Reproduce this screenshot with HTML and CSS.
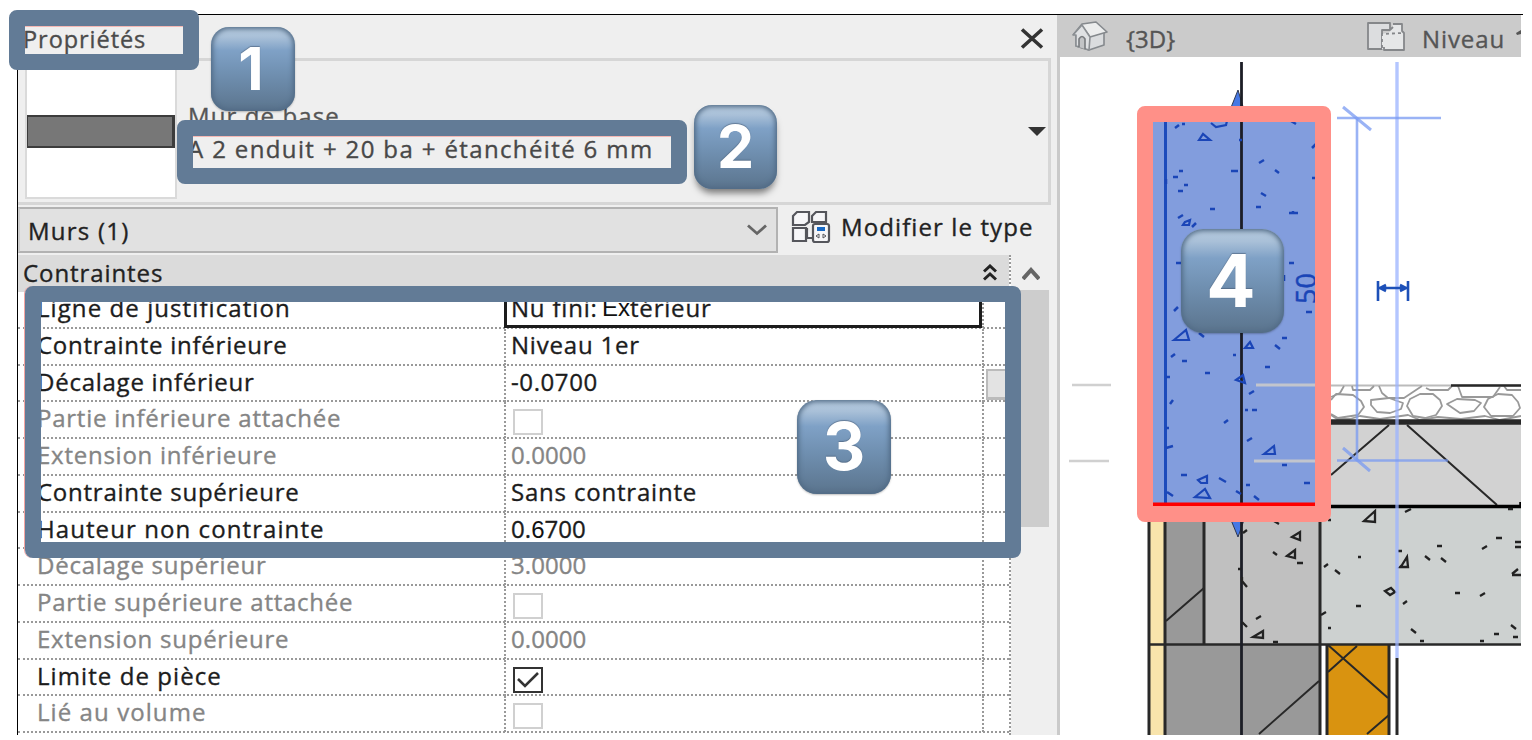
FILE: index.html
```html
<!DOCTYPE html>
<html lang="fr">
<head>
<meta charset="utf-8">
<title>Propriétés</title>
<link rel="stylesheet" href="styles.css">
</head>
<body>
<main class="stage">
  <div class="capture">
    <section class="panel">
      <header class="panel-head">
        <span class="title">Propriétés</span>
        <svg class="close" width="24" height="21" viewBox="0 0 24 21"><path d="M2 1.500L22 19.500M22 1.500L2 19.500" stroke="#333" stroke-width="3.600"/></svg>
      </header>
      <div class="type-box">
        <div class="preview"><div class="preview-bar"></div></div>
        <div class="type-names"><span class="family">Mur de base</span><span class="type">A 2 enduit + 20 ba + étanchéité 6 mm</span></div>
        <svg class="drop" width="18" height="9" viewBox="0 0 18 9"><path d="M0 0H18L9 9Z" fill="#333"/></svg>
      </div>
      <div class="filter-row">
        <div class="combo"><span class="combo-text">Murs (1)</span>
          <svg width="20" height="12" viewBox="0 0 20 12"><path d="M1 1.500L10 9.500L19 1.500" fill="none" stroke="#666" stroke-width="2.800"/></svg>
        </div>
        <svg class="edit-icon" width="40" height="34" viewBox="0 0 40 34" fill="#f6f6f8" stroke="#55565c" stroke-width="2.200">
          <path d="M2 6L6 2H18V12L14 15H2ZM21 6L25 2H35V12H21ZM2 18H15V31H2Z"/><path d="M16 18V28H22"/><rect x="22" y="14" width="16" height="18" rx="2"/><path d="M26 19H34" stroke="#1769c5" stroke-width="4"/><path d="M25 26L28 24V28ZM35 26L32 24V28Z" stroke-width="1"/>
        </svg>
        <span class="edit-text">Modifier le type</span>
      </div>
      <div class="grid-area">
        <div class="table">
          <div class="group"><span class="group-text">Contraintes</span>
            <svg width="14" height="17" viewBox="0 0 14 17"><path d="M1 7.500L7 2L13 7.500M1 15.500L7 10L13 15.500" fill="none" stroke="#222" stroke-width="3"/></svg>
          </div>
          <div class="row"><span class="name wide">Ligne de justification</span><span class="value focus"><span class="v1">Nu fini:</span><span class="arial">Ex</span><span>térieur</span></span><span class="assoc"></span></div>
          <div class="row"><span class="name">Contrainte inférieure</span><span class="value">Niveau 1er</span><span class="assoc"></span></div>
          <div class="row"><span class="name">Décalage inférieur</span><span class="value signed">-0.0700</span><span class="assoc"><i class="assoc-btn"></i></span></div>
          <div class="row off"><span class="name">Partie inférieure attachée</span><span class="value"><i class="check"></i></span><span class="assoc"></span></div>
          <div class="row off"><span class="name">Extension inférieure</span><span class="value num">0.0000</span><span class="assoc"></span></div>
          <div class="row"><span class="name">Contrainte supérieure</span><span class="value">Sans contrainte</span><span class="assoc"></span></div>
          <div class="row"><span class="name wide">Hauteur non contrainte</span><span class="value num">0.<span class="arial">6</span>700</span><span class="assoc"></span></div>
          <div class="row off"><span class="name">Décalage supérieur</span><span class="value num">3.0000</span><span class="assoc"></span></div>
          <div class="row off"><span class="name">Partie supérieure attachée</span><span class="value"><i class="check"></i></span><span class="assoc"></span></div>
          <div class="row off"><span class="name">Extension supérieure</span><span class="value num">0.0000</span><span class="assoc"></span></div>
          <div class="row"><span class="name wide">Limite de pièce</span><span class="value"><i class="check on"><svg width="24" height="20" viewBox="0 0 24 20"><path d="M2 9L9 16L22 3" fill="none" stroke="#333" stroke-width="2.600"/></svg></i></span><span class="assoc"></span></div>
          <div class="row off"><span class="name wide">Lié au volume</span><span class="value"><i class="check"></i></span><span class="assoc"></span></div>
        </div>
        <div class="scroll">
          <svg width="18" height="13" viewBox="0 0 18 13"><path d="M1 12L9 3L17 12" fill="none" stroke="#666" stroke-width="4"/></svg>
          <div class="thumb"></div>
        </div>
      </div>
    </section>
    <section class="view">
      <nav class="tabs">
        <svg class="house" width="36" height="30" viewBox="0 0 36 30" stroke="#85898d" stroke-width="1.600" fill="#dadcde" stroke-linejoin="round">
          <path d="M4 14V25L17 29L32 24V11L22 2L12 10Z"/><path d="M1 14L10 3L24 1L35 11L18 16L10 5" fill="#eceded"/><path d="M17 16V29" fill="none" stroke="#aeb1b4"/><path d="M1 14L10 4L18 16L17 29L4 25V14Z" fill="#dfe1e3" stroke="#8b8f93"/><path d="M7 26V18Q10 13 13 18V28" fill="#c2c4c6" stroke="#777a7d"/>
        </svg>
        <span class="tab-3d">{3D}</span>
        <svg class="plan" width="38" height="29" viewBox="0 0 38 29" fill="#dcdddf" stroke="#85878a" stroke-width="1.800" stroke-linejoin="round">
          <path d="M1 1H23V8H15V27H1Z"/><path d="M15 27V12L23 10L26 2H35V9L37 11V28H17Z" fill="#e6e7e8" stroke="none"/><path d="M15 26V12L35 11" fill="none" stroke-dasharray="3 3"/><path d="M26 5L23 8M26 2H35V9L37 11V28H17V25" fill="none"/>
        </svg>
        <span class="tab-level">Niveau</span>
        <svg class="tab-edge" width="6" height="8" viewBox="0 0 6 8"><path d="M0 4L5 1V5L1 6Z" fill="#555"/></svg>
      </nav>
      <svg class="drawing" width="461" height="678" viewBox="1060 57 461 678">
        <g stroke="#d0d0d0" stroke-width="2.500"><path d="M1072 385H1111M1069 461H1109"/></g>
        <rect x="1150" y="506" width="15" height="229" fill="#f8e4ac"/>
        <rect x="1166" y="506" width="38" height="139" fill="#999"/>
        <rect x="1204" y="506" width="116" height="139" fill="#c0c0c0"/>
        <rect x="1166" y="645" width="154" height="90" fill="#999"/>
        <rect x="1320" y="507" width="201" height="137" fill="#cdd1d0"/>
        <rect x="1320" y="424" width="201" height="82" fill="#d2d2d2"/>
        <rect x="1327" y="645" width="63" height="90" fill="#d99310"/>
        <g fill="none" stroke="#999" stroke-width="1.800" stroke-linejoin="round">
          <path d="M1331 385.500H1521" stroke="#bbb"/>
          <path d="M1331 397L1340 393L1344 386M1352 386L1353 390H1370L1374 386M1379 386L1382 393L1388 398H1404L1413 392L1422 386M1426 388L1430 390H1448L1452 386M1458 386L1462 397H1493L1500 387M1504 386L1507 390H1521"/>
          <path d="M1331 400L1336 394L1353 395L1361 401L1364 407L1358 415L1338 418L1331 414"/>
          <path d="M1371 400L1389 398L1403 403L1401 409L1390 413L1377 412L1371 405Z"/>
          <path d="M1410 399L1420 394H1433L1440 400L1442 406L1436 415L1425 418L1413 416L1407 406Z"/>
          <path d="M1447 404L1457 399L1475 400L1481 403L1474 411L1460 413Z"/>
          <path d="M1488 399L1498 394L1512 395L1518 402L1520 408L1513 416L1491 416L1484 407Z"/>
          <path d="M1331 415L1337 419L1350 419L1360 416L1380 419L1408 415L1420 420L1438 417L1461 419L1485 416L1500 420L1521 416"/>
        </g>
        <g stroke="#282828" fill="none" stroke-width="2">
          <path d="M1451 385.500H1521" stroke-width="2.500"/>
          <path d="M1320 422H1521" stroke-width="5.500"/>
          <path d="M1331 475L1389 425M1407 425L1497 505"/>
          <path d="M1320 506.500H1521V502" stroke="#000" stroke-width="3.500"/>
          <path d="M1149 506V735M1165 506V735M1204 522V645M1320 506V735" stroke-width="3"/>
          <path d="M1149 644.500H1521" stroke-width="2.600"/>
          <path d="M1166 621L1204 588M1259 734L1319 681"/>
          <path d="M1327 645V735M1389 645V735M1397 658V735" stroke-width="3"/>
          <path d="M1328 645L1388 698M1357 646L1328 672M1367 734L1389 715"/>
        </g>
        <rect x="1153" y="115" width="177" height="388" fill="#829ddd"/>
        <path d="M1165.500 118V503" stroke="#1c4bbb" stroke-width="3"/>
        <path d="M1230 110L1238 90L1244 110ZM1231 520L1238 537L1244 520Z" fill="#4678e4" stroke="#303850"/>
        <path d="M1241.500 62V735" stroke="#1c1e26" stroke-width="2.800"/>
        <g stroke="#c2c5cd" stroke-width="2.800"><path d="M1256 385H1316M1254 461H1316"/></g>
        <g fill="none" stroke="#1a45b7" stroke-width="2.200">
          <path d="M1199 140L1203 134L1210 140ZM1211 123L1216 127L1226 125L1227 121M1185 222L1190 220L1189 225H1183ZM1174 340L1186 330L1189 340ZM1245 348L1250 342L1253 348ZM1236 380L1243 375L1245 383ZM1264 454L1274 446L1275 454ZM1198 480L1207 476V483H1201ZM1195 497L1205 489L1210 498Z"/>
          <path stroke-width="2.500" d="M1175 128L1179 125M1182 124H1185M1173 177H1178M1179 171H1183M1178 191H1183M1184 185H1188M1166 179V184M1178 218L1183 215M1192 227L1196 223M1231 171H1238M1239 140H1242M1259 163L1264 160M1275 170L1279 173M1261 193L1266 196M1256 207H1261M1289 213H1298M1293 213V211M1210 209H1215M1312 148L1316 144M1312 178H1316M1291 121L1296 124M1176 263H1181M1289 263H1294M1284 275V281M1174 311L1178 307M1199 333L1204 337M1282 338H1287M1275 345L1280 349M1171 357L1175 354M1182 361H1187M1205 373H1210M1233 355H1236M1166 377H1170M1265 367H1270M1170 404L1173 400M1166 428H1169M1249 394L1254 391M1245 410H1248M1252 410H1257M1224 423L1228 420M1247 441L1252 438M1166 448L1173 446M1181 475H1187M1219 478L1226 482M1167 492L1173 496M1246 485H1250M1236 491L1241 494M1254 496L1259 500M1282 465H1287M1304 483H1310M1306 312H1312"/>
        </g>
        <text class="dim" transform="translate(1315.500 304) rotate(-90)">50</text>
        <rect x="1153" y="502.500" width="163" height="4" fill="#f00"/>
        <g fill="none" stroke="#222" stroke-width="2.300">
          <path d="M1292 537L1300 532V540ZM1287 556L1295 550V558ZM1253 637L1263 631V638ZM1364 521L1375 511V522ZM1402 565L1407 557L1408 567H1400ZM1385 591L1391 588L1395 592L1390 595ZM1512 574L1518 569M1512 575H1521"/>
          <path d="M1274 521L1279 524M1243 533L1247 530M1273 552L1277 555M1297 563H1303M1238 569H1241M1242 577V581L1247 587M1242 622L1247 627M1256 619L1261 616M1273 642H1278M1328 520H1331M1324 567L1328 564M1335 570L1340 574M1358 557H1361M1356 606H1361M1321 615L1326 612M1328 628H1331M1398 551H1402M1405 512L1411 509M1437 546H1442M1425 556L1430 560M1441 558L1446 562M1455 593H1460M1480 596L1485 593M1482 549L1487 546M1496 538H1502M1515 542H1521M1515 547H1521M1508 509H1513M1403 604L1407 601M1411 629L1416 633M1420 641H1424M1480 641H1484M1494 634H1499M1511 625L1516 629M1513 637H1518"/>
        </g>
        <g fill="none" stroke="#7899f2" stroke-opacity=".75">
          <path d="M1397 62V658" stroke-width="3.400" stroke="#9bb3ff"/>
          <path d="M1357 118V460M1337 118H1441M1337 460.500H1448" stroke-width="2.600"/>
          <path d="M1343 107L1371 130M1343 448L1370 471" stroke-width="3"/>
        </g>
        <path d="M1378 281V301M1408 281V301M1379 288H1407M1386 285L1380 288L1386 291M1400 285L1406 288L1400 291" fill="none" stroke="#1d50b8" stroke-width="2.600"/>
      </svg>
    </section>
  </div>
  <div class="ring ring-title"></div>
  <div class="ring ring-type"></div>
  <div class="ring ring-rows"></div>
  <div class="ring ring-wall"></div>
  <div class="badge badge-1">1</div>
  <div class="badge badge-2">2</div>
  <div class="badge badge-3">3</div>
  <div class="badge badge-4">4</div>
</main>
</body>
</html>
```
FILE: styles.css
```css
* { box-sizing: border-box; }
body { margin: 0; background: #fff; font-family: "Open Sans", "Noto Sans", sans-serif; }
.stage { position: relative; width: 1532px; height: 740px; overflow: hidden; padding: 14px 9px 5px 17px; }
.capture { display: flex; height: 721px; border-top: 1px solid #000; border-left: 1px solid #000; }
svg { display: block; flex: none; }

.panel { width: 1042px; flex: none; background: #efefef; border-right: 3px solid #cacaca; display: flex; flex-direction: column; -webkit-text-stroke: .35px currentColor; }
.panel-head { height: 43px; display: flex; justify-content: space-between; align-items: center; padding: 4px 13px 0 5px; font-size: 23.500px; color: #4b4b4b; }
.title { letter-spacing: .95px; }
.type-box { height: 147px; margin-right: 6px; border: solid #d6d6d6; border-width: 3px 3px 3px 0; display: flex; align-items: center; padding-right: 2px; }
.preview { align-self: flex-start; width: 152px; height: 138px; margin-left: 7px; border: 2px solid #dadada; background: #fff; padding-top: 52px; }
.preview-bar { height: 33px; background: #777; border: 2px solid #3c3c3c; border-width: 2px 3px 2px 1px; }
.type-names { flex: 1; display: flex; flex-direction: column; padding-left: 11px; font-size: 24px; line-height: 33px; color: #484848; }
.family { color: #555; letter-spacing: 1.100px; }
.type { letter-spacing: 1.370px; }
.filter-row { height: 50px; display: flex; padding-top: 2px; }
.combo { width: 760px; height: 46px; background: #e1e1e1; border: 2px solid #b2b2b2; border-left-color: #ccc; display: flex; justify-content: space-between; align-items: center; padding: 0 9px 0 8px; font-size: 24px; color: #222; }
.combo-text { letter-spacing: 1.250px; }
.edit-icon { margin: 3px 0 0 13px; }
.edit-text { padding-left: 10px; font-size: 24px; line-height: 39px; letter-spacing: 1.100px; color: #222; white-space: nowrap; }

.grid-area { flex: 1; display: flex; min-height: 0; }
.table { width: 993px; height: 480px; background: #fff; border-right: 2px dotted #999; overflow: hidden; }
.group { width: 993px; height: 37px; background: #dbdbdb; display: flex; justify-content: space-between; align-items: center; padding: 0 14px 2px 5px; font-size: 24px; color: #222; }
.group-text { letter-spacing: .92px; }
.row { display: grid; grid-template-columns: 486px 478px 1fr; height: 36.750px; border-bottom: 2px dotted #999; font-size: 24px; line-height: 32px; letter-spacing: .8px; color: #1c1c1c; white-space: nowrap; }
.row > span { display: block; height: 36px; }
.name { padding-left: 19px; letter-spacing: .75px; }
.name.wide { letter-spacing: 1.080px; }
.value { border-left: 2px dotted #999; padding-left: 5px; }
.num { letter-spacing: .05px; }
.signed { letter-spacing: .6px; }
.row > .focus { display: flex; border: 3px solid #1c1c1c; border-top: 0; padding-left: 4px; }
.v1 { width: 91px; }
.assoc { border-left: 2px dotted #999; }
.arial { font-family: "Liberation Sans", Arial, sans-serif; letter-spacing: 0; color: #111; -webkit-text-stroke: 0; }
.row.off { color: #858585; }
.check { display: block; width: 30px; height: 26px; margin: 7px 0 0 2px; border: 2px solid #d0d0d0; background: #fff; }
.check.on { border-color: #333; padding: 1px; }
.assoc-btn { display: block; height: 31px; margin: 3px 0 0 2px; background: #e3e3e3; border: 2px solid #bbb; border-bottom-width: 3px; }
.scroll { flex: 1; padding: 12px 8px 0 2px; display: flex; flex-direction: column; align-items: center; }
.thumb { width: 100%; height: 237px; margin-top: 10px; background: #cdcdcd; }

.view { width: 461px; }
.tabs { height: 42px; width: 461px; background: #cbcbcb; display: flex; align-items: center; font-size: 24px; color: #555; white-space: nowrap; -webkit-text-stroke: .35px currentColor; }
.house { margin-left: 12px; }
.tab-3d { width: 190px; padding: 5px 0 0 18px; flex: none; }
.plan { margin-left: 69px; }
.tab-level { padding: 5px 0 0 17px; width: 111px; flex: none; letter-spacing: .9px; }
.tab-edge { margin-top: -6px; }
.dim { font: 27px "Open Sans", sans-serif; fill: #1a45b7; stroke: #1a45b7; stroke-width: .5px; }

.ring { position: absolute; border: 16px solid #627b96; border-radius: 8px; }
.ring-title { left: 9px; top: 10px; width: 190px; height: 60px; box-shadow: inset 0 1px #f5b8b4; }
.ring-type { left: 177px; top: 120px; width: 510px; height: 64px; box-shadow: inset 0 1px #f5b8b4; }
.ring-rows { left: 25px; top: 286px; width: 996px; height: 272px; box-shadow: -1px 0 #f5a5a2; }
.ring-wall { left: 1137px; top: 106px; width: 194px; height: 416px; border-color: #ff9088; }
.badge { position: absolute; display: flex; align-items: center; justify-content: center; padding-bottom: 2px; color: #fff; font-family: Inter, "Liberation Sans", sans-serif; font-weight: 700; background: linear-gradient(#b7cbdf 0, #a9c0d8 12%, #7fa1c6 28%, #7090b1 55%, #5b748d 100%); box-shadow: inset 0 0 5px 2px #516b86, 0 1px 2px rgba(0,0,0,.25); text-shadow: 0 -1px 1px rgba(70,90,115,.6); }
.badge-1 { left: 211px; top: 27px; width: 84px; height: 84px; border-radius: 18px; font-size: 59px; padding-right: 4px; }
.badge-2 { left: 694px; top: 105px; width: 83px; height: 84px; border-radius: 18px; font-size: 59px; box-shadow: inset 0 0 5px 2px #516b86, 0 6px 7px -2px rgba(0,0,0,.5); }
.badge-3 { left: 797px; top: 400px; width: 94px; height: 94px; border-radius: 20px; font-size: 66px; }
.badge-4 { left: 1181px; top: 229px; width: 103px; height: 104px; border-radius: 22px; font-size: 73px; padding-right: 3px; }
```
